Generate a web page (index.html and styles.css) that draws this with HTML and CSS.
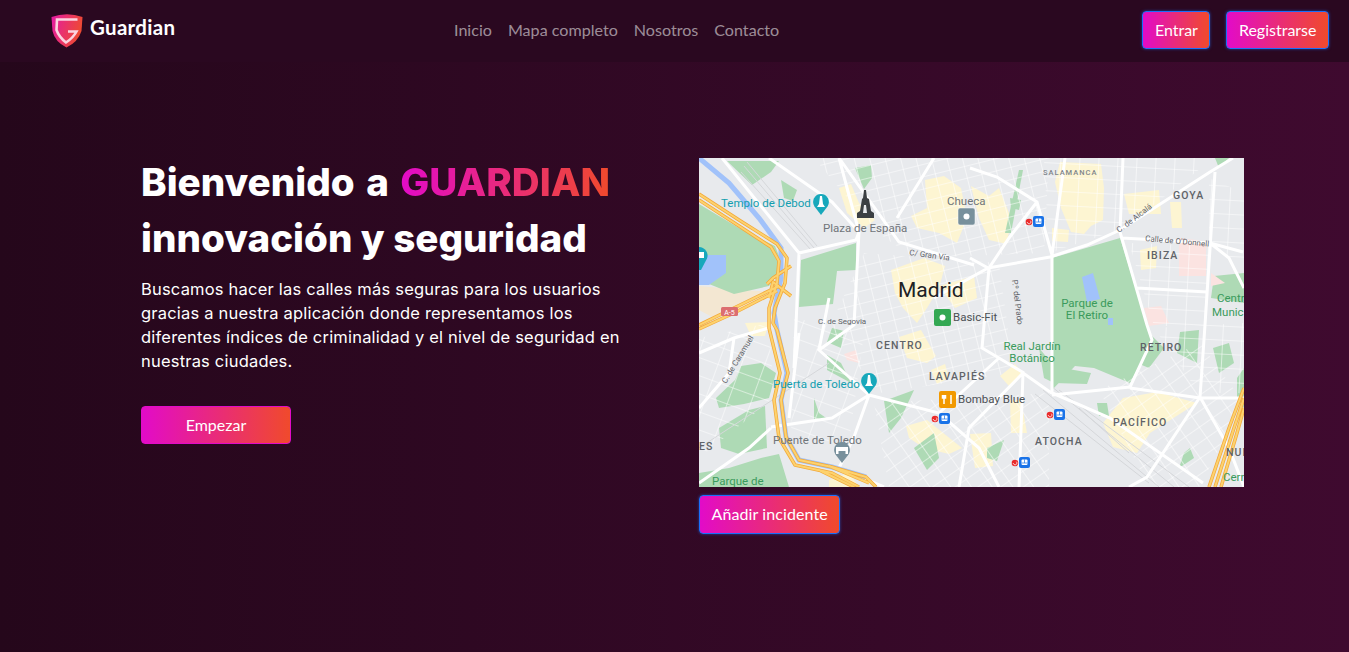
FILE: index.html

```html
<!DOCTYPE html>
<html lang="es">
<head>
  <meta charset="UTF-8" />
  <meta name="viewport" content="width=device-width, initial-scale=1.0"/>
  <title>Guardian</title>
  <link rel="stylesheet" href="styles.css">
</head>
<body>
  <nav class="navbar">
    <a class="brand" href="#">
      <svg class="brand-logo" viewBox="0 0 32 35" width="32" height="35">
        <defs>
          <linearGradient id="shield" x1="0" y1="0" x2="1" y2="0.3">
            <stop offset="0" stop-color="#e41aa5"/>
            <stop offset="1" stop-color="#ee4a32"/>
          </linearGradient>
        </defs>
        <path d="M0.5 4 Q16 -1.500 31.500 4 L30.500 18 Q27 29 15.500 34.500 Q4 29 1.500 18 Z" fill="url(#shield)"/>
        <path d="M26.500 6.500 L6 6.500 L5.500 17 Q8 24 15 29.500 Q22 25 25.500 18.500 L17 18.500" fill="none" stroke="#fbd3df" stroke-width="2.600"/>
      </svg>
      <span class="brand-name">Guardian</span>
    </a>
    <ul class="nav-links">
      <li><a href="#">Inicio</a></li>
      <li><a href="#">Mapa completo</a></li>
      <li><a href="#">Nosotros</a></li>
      <li><a href="#">Contacto</a></li>
    </ul>
    <div class="nav-actions">
      <button class="btn btn-blue">Entrar</button>
      <button class="btn btn-blue">Registrarse</button>
    </div>
  </nav>

  <main class="hero">
    <section class="hero-text">
      <h1><span class="line-one">Bienvenido a <span class="grad-text">GUARDIAN</span></span><br>innovación y seguridad</h1>
      <p>Buscamos hacer las calles más seguras para los usuarios gracias a nuestra aplicación donde representamos los diferentes índices de criminalidad y el nivel de seguridad en nuestras ciudades.</p>
      <button class="btn btn-start">Empezar</button>
    </section>

    <section class="hero-map">
      <svg class="map" viewBox="0 0 545 329" width="545" height="329">
        <defs>
          <pattern id="gridA" width="15" height="12" patternUnits="userSpaceOnUse" patternTransform="rotate(-14)">
            <path d="M0 0H15M0 0V12" stroke="#fff" stroke-width="1.100" fill="none"/>
          </pattern>
          <pattern id="gridB" width="19" height="14" patternUnits="userSpaceOnUse" patternTransform="rotate(3)">
            <path d="M0 0H19M0 0V14" stroke="#fff" stroke-width="1.100" fill="none"/>
          </pattern>
          <pattern id="gridC" width="17" height="13" patternUnits="userSpaceOnUse" patternTransform="rotate(-35)">
            <path d="M0 0H17M0 0V13" stroke="#fff" stroke-width="1.100" fill="none"/>
          </pattern>
          <pattern id="gridD" width="22" height="17" patternUnits="userSpaceOnUse" patternTransform="rotate(20)">
            <path d="M0 0H22M0 0V17" stroke="#fff" stroke-width="1" fill="none"/>
          </pattern>
        </defs>

        <rect width="545" height="329" fill="#e8eaed"/>

        <!-- barrios -->
        <g class="yellow">
          <path d="M140 30 L152 26 L160 45 L176 62 L165 70 L148 55 Z"/>
          <path d="M226 22 L245 18 L262 30 L268 60 L258 85 L240 75 L218 70 L212 58 L228 50 Z"/>
          <path d="M272 28 L290 38 L300 30 L312 60 L308 86 L290 82 L280 60 Z"/>
          <path d="M361 4 L402 6 L405 30 L404 62 L392 68 L385 76 L372 74 L362 50 L356 24 Z"/>
          <path d="M425 36 L460 32 L462 56 L430 56 Z"/>
          <path d="M471 44 L482 44 L483 70 L473 70 Z"/>
          <path d="M353 70 L370 72 L369 84 L353 83 Z"/>
          <path d="M441 92 L458 88 L457 110 L442 112 Z"/>
          <path d="M192 112 L225 100 L246 108 L240 130 L228 150 L218 165 L204 150 L196 135 Z"/>
          <path d="M240 128 L275 118 L278 140 L256 150 Z"/>
          <path d="M200 179 L222 172 L237 198 L228 205 L208 200 Z"/>
          <path d="M301 218 L316 206 L324 216 L310 228 Z"/>
          <path d="M207 268 L228 262 L263 290 L250 296 L225 290 L210 280 Z"/>
          <path d="M232 212 L246 206 L250 220 L238 226 Z"/>
          <path d="M424 240 L458 234 L498 245 L451 275 L438 295 L414 289 L404 265 Z"/>
          <path d="M271 276 L292 275 L294 308 L276 310 Z"/>
          <path d="M311 242 L322 242 L328 275 L312 275 Z"/>
          <path d="M130 322 L150 315 L160 329 L130 329 Z"/>
          <path d="M46 165 L70 164 L66 178 L52 178 Z"/>
        </g>
        <path d="M0 128 L70 134 L50 150 L15 160 L0 152 Z" fill="#f3e7d2"/>

        <!-- parques -->
        <g fill="#aedab5">
          <path d="M0 46 L40 70 L76 88 L84 108 L70 128 L35 136 L0 122 Z"/>
          <path d="M28 3 L80 3 L72 14 L53 27 Z"/>
          <path d="M82 22 L98 32 L94 43 L85 40 Z"/>
          <path d="M102 102 L157 85 L157 112 L138 113 L134 146 L100 149 Z"/>
          <path d="M156 10 L172 7 L173 20 L165 31 Z"/>
          <path d="M353 100 L421 80 L448 167 L458 190 L452 186 L431 225 L395 210 L376 208 L353 232 Z"/>
          <path d="M17 240 L36 222 L42 208 L62 205 L77 215 L70 240 L45 246 L20 250 Z"/>
          <path d="M20 270 L50 252 L66 248 L68 290 L40 296 L22 290 Z"/>
          <path d="M0 315 L30 310 L62 300 L80 296 L90 329 L0 329 Z"/>
          <path d="M133 170 L145 173 L142 190 L128 184 Z"/>
          <path d="M128 197 L142 205 L152 225 L128 212 Z"/>
          <path d="M185 243 L215 232 L202 260 L190 275 Z"/>
          <path d="M215 290 L235 275 L240 300 L228 312 Z"/>
          <path d="M115 240 L120 255 L130 262 L115 262 Z"/>
          <path d="M340 190 L355 208 L375 212 L392 215 L388 226 L355 225 L345 220 Z"/>
          <path d="M398 245 L408 245 L410 258 L400 258 Z"/>
          <path d="M481 174 L500 172 L498 205 L478 195 Z"/>
          <path d="M450 175 L465 190 L450 210 L438 205 Z"/>
          <path d="M514 190 L530 185 L535 205 L520 215 Z"/>
          <path d="M516 0 L530 0 L520 10 Z"/>
          <path d="M515 118 L545 115 L545 145 L512 140 Z"/>
          <path d="M311 40 L322 42 L320 52 L312 50 Z"/>
          <path d="M288 290 L305 282 L298 303 L288 300 Z"/>
          <path d="M491 290 L495 300 L480 310 L485 295 Z"/>
          <path d="M538 220 L545 210 L545 250 L538 240 Z"/>
          <path d="M306 75 L320 12 L324 12 L312 75 Z"/>
        </g>

        <!-- pink blocks -->
        <g fill="#fbe3e1">
          <path d="M480 80 L497 82 L507 85 L507 118 L480 118 Z"/>
          <path d="M512 115 L526 125 L512 128 Z"/>
          <path d="M445 150 L462 148 L470 165 L450 168 Z"/>
          <path d="M145 196 L157 192 L160 205 L148 202 Z"/>
        </g>

        <!-- manzanas -->
        <path fill="url(#gridA)" d="M115 0 L350 0 L345 95 L215 100 L175 72 Z"/>
        <path fill="url(#gridB)" d="M345 0 L515 0 L425 70 L350 95 Z"/>
        <path fill="url(#gridB)" d="M430 85 L510 88 L505 168 L455 168 Z"/>
        <path fill="url(#gridA)" d="M165 95 L300 105 L315 215 L180 235 L130 170 Z"/>
        <path fill="url(#gridC)" d="M175 245 L350 235 L350 329 L190 329 Z"/>
        <path fill="url(#gridC)" d="M400 232 L501 185 L545 245 L500 329 L450 329 Z"/>
        <path fill="url(#gridD)" d="M0 180 L70 165 L75 240 L0 300 Z"/>
        <path fill="url(#gridD)" d="M95 160 L165 175 L150 285 L92 280 Z"/>
        <path fill="url(#gridB)" d="M510 20 L545 35 L545 110 L510 85 Z"/>
        <path fill="url(#gridB)" d="M455 170 L545 165 L545 235 L500 235 Z"/>

        <!-- vias -->
        <path class="rail" d="M45 8 L115 90 M42 14 L112 92 M48 4 L118 88 M336 236 L450 325 M344 232 L460 329 M352 228 L475 329 M360 232 L490 329 M380 250 L430 295 M130 205 L0 290"/>

        <!-- carreteras blancas -->
        <path class="road" d="M23 0 L100 95 L157 82 L160 74 L140 0 M70 0 L133 44 L160 74 M140 0 L200 84 L275 107 M100 95 L97 167 L95 210 M160 74 L155 167 L120 192 L170 237 M289 110 L351 99 L388 87 L421 72 L511 14 L534 0 M271 100 L289 110 L235 140 M271 10 L298 19 L338 44 L353 97 M366 0 L353 97 L353 234 M424 0 L421 74 L448 167 L453 182 L431 229 M516 14 L506 167 L501 239 L448 319 L430 329 M423 80 L511 85 L544 94 M438 130 L508 134 M431 230 L501 240 L545 240 M351 234 L411 260 L504 325 M353 237 L431 229 M324 215 L351 234 M324 215 L270 270 L260 329 M170 237 L155 279 L140 310 M170 237 L240 255 L280 290 L300 329 M170 237 L133 260 L72 269 M240 255 L300 200 L325 215 M324 215 L320 329 M72 270 L50 290 L0 325 M338 44 L310 80 L290 110 L283 190 L300 200 M235 0 L198 60 M0 195 L35 180 L70 170 M35 180 L30 215 L0 250 M120 192 L130 140 M140 310 L185 329 M100 175 L90 260 M545 130 L530 100 L511 85 M501 239 L530 290 L545 329"/>

        <!-- agua -->
        <path class="water" d="M0 0 L30 25 L60 60 L82 90 L82 120 L75 155 L78 172 L88 215 L82 242 L87 279 L100 302 L133 309 L167 319" />
        <path d="M0 97 L27 97 L27 115 L10 127 L0 127 Z" fill="#a1c2fa"/>
        <path d="M383 119 L394 115 L401 141 L388 144 Z" fill="#a1c2fa"/>
        <path d="M409 160 L414 160 L414 167 L409 167 Z" fill="#a1c2fa"/>

        <!-- autovias -->
        <g class="motorways">
          <path class="hw-out" d="M0 36 L40 62 L78 86 L88 100 L86 125 L76 150 L74 165 L78 172 L89 215 L82 242 L87 279 L100 302 L133 309 L167 319 L177 329 M0 167 L35 150 L80 128 M0 42 L40 68 L72 89 L80 103 L78 125 L70 150 L70 170 L81 215 L75 242 L80 280 L96 307 L133 315 L160 329 M0 171 L35 155 L78 133 M545 230 L530 270 L510 329 M545 240 L535 270 L516 329 M545 250 L538 275 L522 329 M130 308 L170 325 M68 126 L74 120 L92 108 M70 140 L74 124 L92 138 M120 312 L155 329"/>
          <path class="hw-in" d="M0 36 L40 62 L78 86 L88 100 L86 125 L76 150 L74 165 L78 172 L89 215 L82 242 L87 279 L100 302 L133 309 L167 319 L177 329 M0 167 L35 150 L80 128 M0 42 L40 68 L72 89 L80 103 L78 125 L70 150 L70 170 L81 215 L75 242 L80 280 L96 307 L133 315 L160 329 M0 171 L35 155 L78 133 M545 230 L530 270 L510 329 M545 240 L535 270 L516 329 M545 250 L538 275 L522 329 M130 308 L170 325 M68 126 L74 120 L92 108 M70 140 L74 124 L92 138 M120 312 L155 329"/>
        </g>

        <!-- rotulos -->
        <g class="lbl lbl-teal">
          <text x="22" y="49">Templo de Debod</text>
          <text x="74" y="230">Puerta de Toledo</text>
        </g>
        <g class="lbl lbl-grey">
          <text x="124" y="74">Plaza de España</text>
          <text x="248" y="47">Chueca</text>
          <text x="74" y="286">Puente de Toledo</text>
        </g>
        <text class="lbl-city" x="199" y="139">Madrid</text>
        <g class="lbl lbl-dark">
          <text x="254" y="163">Basic-Fit</text>
          <text x="259" y="245">Bombay Blue</text>
        </g>
        <g class="lbl-area">
          <text x="177" y="191">CENTRO</text>
          <text x="230" y="222">LAVAPIÉS</text>
          <text x="441" y="193">RETIRO</text>
          <text x="414" y="268">PACÍFICO</text>
          <text x="336" y="287">ATOCHA</text>
          <text x="474" y="41">GOYA</text>
          <text x="448" y="101">IBIZA</text>
          <text x="0" y="292">ES</text>
          <text x="527" y="298">NUI</text>
        </g>
        <text class="lbl-small" x="344" y="17" letter-spacing="1">SALAMANCA</text>
        <g class="lbl-park">
          <text x="388" y="149" text-anchor="middle">Parque de</text>
          <text x="388" y="161" text-anchor="middle">El Retiro</text>
          <text x="333" y="192" text-anchor="middle">Real Jardín</text>
          <text x="333" y="204" text-anchor="middle">Botánico</text>
          <text x="518" y="144">Centr</text>
          <text x="513" y="158">Munic</text>
          <text x="524" y="323">Cern</text>
          <text x="13" y="327">Parque de</text>
        </g>
        <g class="lbl-street">
          <text x="119" y="166">C. de Segovia</text>
          <text transform="translate(210 97) rotate(8)">C/ Gran Vía</text>
          <text transform="translate(420 75) rotate(-37)">C. de Alcalá</text>
          <text transform="translate(446 83) rotate(5)">Calle de O'Donnell</text>
          <text transform="translate(313 122) rotate(83)">P.º del Prado</text>
          <text transform="translate(27 226) rotate(-59)">C. de Caramuel</text>
        </g>

        <!-- A-5 -->
        <rect x="22" y="149" width="17" height="9" rx="1.500" fill="#dc6e70"/>
        <text class="lbl-shield" x="30.500" y="156.500" text-anchor="middle">A-5</text>

        <!-- iconos -->
        <g fill="#17a8bb">
          <path d="M122 36 a8 8 0 0 1 6.500 12.500 L122 57 L115.500 48.500 A8 8 0 0 1 122 36 Z"/>
          <path d="M170 215 a8 8 0 0 1 6.500 12.500 L170 236 L163.500 227.500 A8 8 0 0 1 170 215 Z"/>
          <path d="M0 89 a8.500 8.500 0 0 1 8 11.500 L2 112 L0 112 Z"/>
        </g>
        <g fill="#fff">
          <path d="M121 38 H123 L124 46 L126 49 H118 L120 46 Z"/>
          <path d="M169 217 H171 L172 225 L174 228 H166 L168 225 Z"/>
          <path d="M0 94 H5 V100 H0 Z"/>
        </g>
        <path d="M143 284 a8 8 0 0 1 6.500 12.500 L143 305 L136.500 296.500 A8 8 0 0 1 143 284 Z" fill="#78909c"/>
        <path d="M137 289 H149 V296 H146.500 V293 H139.500 V296 H137 Z" fill="#fff"/>
        <path d="M165 32 H167 L168 40 L170 41 L172 53 L175 55 V60 H158 V55 L161 53 L163 41 L164 40 Z" fill="#3c4043"/>
        <path d="M165 47 H167 L168 55 H164 Z" fill="#e8eaed"/>

        <rect x="259" y="50" width="17" height="17" rx="2" fill="#78909c" stroke="#fff" stroke-width=".5"/>
        <circle cx="267.500" cy="58.500" r="3" fill="#fff"/>
        <rect x="235" y="151" width="17" height="17" rx="2" fill="#34a853"/>
        <circle cx="243.500" cy="159.500" r="3" fill="#fff"/>
        <rect x="240" y="233" width="17" height="17" rx="2" fill="#f29900"/>
        <path d="M245 237 V246 M252 237 V246 M243.500 237 V240 H246.500 V237" stroke="#fff" stroke-width="1.500" fill="none"/>

        <g id="metro">
          <circle cx="330" cy="64" r="3.300" fill="#ea2a2a"/>
          <path d="M331.300 62.700 A1.800 1.800 0 1 1 328.300 64" stroke="#fff" stroke-width=".8" fill="none"/>
          <rect x="334" y="58" width="11" height="11" rx="2" fill="#1a73e8"/>
          <rect x="336.500" y="60.500" width="6" height="5.500" rx="1" fill="#fff"/>
          <path d="M339.500 60.500 V64 M336.500 64 H342.500" stroke="#1a73e8" stroke-width=".7"/>
        </g>
        <use href="#metro" x="-94" y="197"/>
        <use href="#metro" x="21" y="193"/>
        <use href="#metro" x="-14" y="241"/>
      </svg>
      <button class="btn btn-blue btn-add">Añadir incidente</button>
    </section>
  </main>
</body>
</html>
```

FILE: styles.css

```css
:root {
  --grad: linear-gradient(90deg, #e20bc8, #f04a2c);
  --blue: #1a6ffa;
}

* {
  box-sizing: border-box;
}

body {
  margin: 0;
  height: 652px;
  overflow: hidden;
  font-family: "Lato", sans-serif;
  color: #fff;
  background: linear-gradient(90deg, #25071b, #3f0a2f);
}

.navbar {
  height: 62px;
  padding: 11px 20px 0 51px;
  display: flex;
  background-color: #2a0820;
}

.brand {
  display: flex;
  align-items: flex-start;
  gap: 7px;
  width: 403px;
  padding-top: 2px;
  color: #fff;
  text-decoration: none;
}

.brand-name {
  margin-top: 2px;
  font-size: 20.500px;
  font-weight: 700;
  letter-spacing: .3px;
}

.nav-links {
  display: flex;
  gap: 16px;
  margin: 0;
  padding: 9px 0 0;
  list-style: none;
  flex: 1;
}

.nav-links a {
  color: rgba(255, 255, 255, .55);
  font-size: 16.100px;
  text-decoration: none;
}

.nav-actions {
  display: flex;
  gap: 16px;
  height: 38px;
}

.btn {
  height: 38px;
  padding: 0 11.500px 2px;
  border: 1px solid transparent;
  border-radius: 4px;
  font-family: inherit;
  font-size: 16px;
  color: #fff;
  background: var(--grad);
}

.btn-blue {
  border: 1px solid var(--blue);
  box-shadow: 0 0 3px rgba(26, 111, 250, .6);
}

.btn-start {
  width: 150px;
  border-color: #e20bc8;
}

.btn-add {
  display: block;
  margin-top: 8px;
  height: 39px;
  letter-spacing: .1px;
}

.hero {
  display: flex;
  padding: 96px 0 0 141px;
}

.hero-text {
  width: 558px;
}

h1 {
  margin: -4px 0 11px;
  font-family: "Inter", sans-serif;
  font-size: 38.600px;
  font-weight: 800;
  line-height: 56px;
}

.line-one {
  word-spacing: 3px;
}

.grad-text {
  background: var(--grad);
  -webkit-background-clip: text;
  background-clip: text;
  color: transparent;
}

.hero-text p {
  width: 485px;
  margin: 0 0 33px;
  font-family: "Inter", sans-serif;
  font-size: 16.500px;
  letter-spacing: .2px;
  line-height: 24px;
}

.map {
  display: block;
}

.yellow {
  fill: #fdf5d2;
}

.rail {
  fill: none;
  stroke: #d5d7da;
  stroke-width: 1;
}

.road {
  fill: none;
  stroke: #fff;
  stroke-width: 3;
}

.water {
  fill: none;
  stroke: #a1c2fa;
  stroke-width: 5;
}

.motorways path {
  fill: none;
  stroke-linejoin: round;
}

.hw-out {
  stroke: #f2a93b;
  stroke-width: 3.500;
}

.hw-in {
  stroke: #fdd26e;
  stroke-width: 2;
}

.map text {
  font-family: "Roboto", sans-serif;
}

.lbl {
  font-size: 11.500px;
}

.lbl-teal {
  fill: #129eaf;
}

.lbl-grey {
  fill: #70757a;
}

.lbl-dark {
  fill: #4c5054;
}

.lbl-city {
  font-size: 21px;
  fill: #202124;
}

.lbl-area {
  font-size: 10.500px;
  font-weight: 500;
  letter-spacing: 1.100px;
  fill: #5f6368;
}

.lbl-small {
  font-size: 7.500px;
  font-weight: 500;
  fill: #80868b;
}

.lbl-park {
  font-size: 11.500px;
  fill: #3a9b5c;
}

.lbl-street {
  font-size: 8px;
  fill: #5f6368;
}

.lbl-shield {
  font-size: 7px;
  fill: #fff;
}
```
